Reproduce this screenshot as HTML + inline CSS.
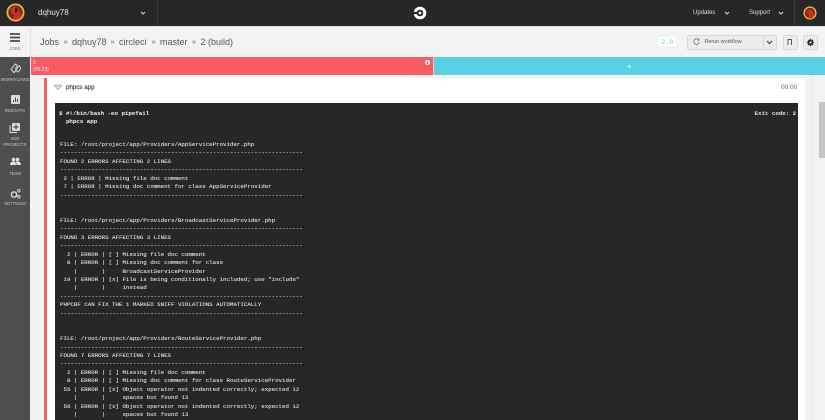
<!DOCTYPE html>
<html><head><meta charset="utf-8">
<style>
html,body{margin:0;padding:0;width:825px;height:420px;overflow:hidden;background:#f3f3f3;font-family:"Liberation Sans",sans-serif}
.a{position:absolute}
.t{position:absolute;white-space:nowrap}
.nav{position:absolute;left:0;width:30px;text-align:center;color:#c8c8c8;font-size:4.3px;line-height:6px}
.bc{position:absolute;white-space:nowrap;top:35.500px;font-size:9px;line-height:12px;color:#555}
.sep{position:absolute;white-space:nowrap;top:35.500px;font-size:7.500px;line-height:12px;color:#666}
pre{margin:0;font-family:"Liberation Mono",monospace;font-size:5.790px;line-height:8.430px;color:#e8e8e8;position:absolute;white-space:pre;-webkit-text-stroke:.07px #e8e8e8}
</style></head>
<body>
<!-- top bar -->
<div class="a" style="left:0;top:0;width:825px;height:26px;background:#272727"></div>
<div class="a" style="left:0;top:26px;width:825px;height:1px;background:#e3e3e3"></div>
<div class="a" style="left:157px;top:0;width:1px;height:26px;background:#3a3a3a"></div>
<div class="a" style="left:794px;top:0;width:1px;height:26px;background:#3f3f3f"></div>
<svg class="a" style="left:6px;top:3px" width="19" height="19" viewBox="0 0 19 19"><circle cx="9.500" cy="9.500" r="9" fill="#f2b53a"/><circle cx="9.500" cy="9.500" r="7.200" fill="#6b2a1c"/><path d="M4 6l5-3 4 3 1 3 2 3-3 4.500H7l1-4.500-3-2z" fill="#c2322a"/><path d="M9 5l3 1-1 3-2 1z" fill="#2a1510"/></svg>
<div class="t" style="left:38px;top:7.500px;font-size:8px;line-height:10px;color:#e4e4e4">dqhuy78</div>
<svg class="a" style="left:140px;top:11px" width="6" height="4" viewBox="0 0 6 4"><path d="M1 1l2 2 2-2" fill="none" stroke="#ddd" stroke-width="1"/></svg>
<svg class="a" style="left:413px;top:6px" width="14" height="14" viewBox="0 0 14 14"><circle cx="7" cy="7" r="4.800" fill="none" stroke="#fff" stroke-width="3"/><rect x="0" y="5.900" width="5" height="2.200" fill="#272727"/><circle cx="7" cy="7" r="1.400" fill="#fff"/></svg>
<div class="t" style="left:693px;top:9px;font-size:6px;line-height:8px;color:#ddd">Updates</div>
<svg class="a" style="left:724px;top:11px" width="6" height="4" viewBox="0 0 6 4"><path d="M1 1l2 2 2-2" fill="none" stroke="#ddd" stroke-width="1"/></svg>
<div class="t" style="left:749px;top:9px;font-size:6px;line-height:8px;color:#ddd">Support</div>
<svg class="a" style="left:778px;top:11px" width="6" height="4" viewBox="0 0 6 4"><path d="M1 1l2 2 2-2" fill="none" stroke="#ddd" stroke-width="1"/></svg>
<svg class="a" style="left:803px;top:6px" width="14" height="14" viewBox="0 0 14 14"><circle cx="7" cy="7" r="6.600" fill="#f2b53a"/><circle cx="7" cy="7" r="5.200" fill="#6b2a1c"/><path d="M3.500 5l3.500-2 2.500 2 1 2 1 2-2 3.500H5.500l.5-3.500L3.500 7z" fill="#c2322a"/></svg>

<!-- sidebar -->
<div class="a" style="left:0;top:27px;width:30px;height:393px;background:#4e4e4e"></div>
<div class="a" style="left:0;top:27px;width:30px;height:30px;background:#f3f3f3"></div>
<div class="a" style="left:30px;top:27px;width:1px;height:30px;background:#e3e3e3"></div>
<div class="a" style="left:30px;top:57px;width:1px;height:363px;background:#f3f3f3"></div>
<svg class="a" style="left:10px;top:33px" width="10" height="9" viewBox="0 0 10 9"><path d="M0 1h10M0 4.500h10M0 8h10" stroke="#4a4a4a" stroke-width="1.800"/></svg>
<div class="nav" style="top:45.500px;color:#777">JOBS</div>
<svg class="a" style="left:10px;top:63px" width="11" height="11" viewBox="0 0 11 11"><path d="M1 6.500l3-4 1.500-1.500 2 1.500-2 3 1 2.500 1.500 1 3-3.500-1.500-2.500-1.500 1-2.500 4-1.500 1.500z" fill="none" stroke="#d5d5d5" stroke-width="1"/></svg>
<div class="nav" style="top:77px">WORKFLOWS</div>
<div class="a" style="left:11px;top:95px;width:9px;height:9px;background:#dcdcdc;border-radius:1px"></div>
<svg class="a" style="left:11px;top:95px" width="9" height="9" viewBox="0 0 9 9"><path d="M2.500 7V5M4.500 7V2.500M6.500 7V4" stroke="#4a4a4a" stroke-width="1"/></svg>
<div class="nav" style="top:108px">INSIGHTS</div>
<svg class="a" style="left:9px;top:122px" width="12" height="12" viewBox="0 0 12 12"><path d="M1 3v7.500h7" fill="none" stroke="#dcdcdc" stroke-width="1"/><rect x="3" y="1" width="8" height="8" rx="1" fill="#dcdcdc"/><path d="M7 2.500v5M4.500 5h5" stroke="#4a4a4a" stroke-width="1.200"/></svg>
<div class="nav" style="top:135.500px">ADD</div>
<div class="nav" style="top:142px">PROJECTS</div>
<svg class="a" style="left:10px;top:157px" width="11" height="9" viewBox="0 0 11 9"><circle cx="3.500" cy="2.500" r="1.800" fill="#e2e2e2"/><circle cx="7.500" cy="2.500" r="1.800" fill="#e2e2e2"/><path d="M0 8c0-3 2-3.500 3.500-3.500S6 5 6 8zM6.500 8c0-1.500-.3-2.500-1-3.300.6-.2 1.300-.2 2-.2C9 4.500 11 5 11 8z" fill="#e2e2e2"/></svg>
<div class="nav" style="top:170.500px">TEAM</div>
<svg class="a" style="left:10px;top:188px" width="11" height="11" viewBox="0 0 11 11"><circle cx="4" cy="6.500" r="2.600" fill="none" stroke="#dcdcdc" stroke-width="1.400"/><circle cx="8.800" cy="2.700" r="1.300" fill="none" stroke="#dcdcdc" stroke-width=".9"/><circle cx="8.800" cy="8.800" r="1.300" fill="none" stroke="#dcdcdc" stroke-width=".9"/></svg>
<div class="nav" style="top:201px">SETTINGS</div>

<!-- breadcrumb bar -->
<div class="bc" style="left:40px">Jobs</div>
<div class="sep" style="left:63.500px">»</div>
<div class="bc" style="left:72px">dqhuy78</div>
<div class="sep" style="left:110.500px">»</div>
<div class="bc" style="left:119px">circleci</div>
<div class="sep" style="left:151.500px">»</div>
<div class="bc" style="left:160px">master</div>
<div class="sep" style="left:192px">»</div>
<div class="bc" style="left:200.500px">2 (build)</div>
<div class="a" style="left:658px;top:37px;width:18px;height:9px;background:#fff"></div>
<div class="t" style="left:661.500px;top:37.500px;font-family:'Liberation Mono',monospace;font-size:6.500px;line-height:9px;color:#5ad1e3">2.0</div>
<div class="a" style="left:687px;top:35px;width:75px;height:13px;background:#ececec;border:.5px solid #d9d9d9;border-radius:2px 0 0 2px"></div>
<div class="a" style="left:763px;top:35px;width:12px;height:13px;background:#ececec;border:.5px solid #d9d9d9;border-radius:0 2px 2px 0"></div>
<svg class="a" style="left:693px;top:38px" width="7" height="7" viewBox="0 0 7 7"><path d="M6 2.200A2.800 2.800 0 1 0 6.300 4.200" fill="none" stroke="#666" stroke-width=".8"/><path d="M6.300 .6v2h-2z" fill="#666"/></svg>
<div class="t" style="left:704.500px;top:37.500px;font-size:5.400px;line-height:8px;color:#555">Rerun workflow</div>
<svg class="a" style="left:766px;top:40px" width="7" height="5" viewBox="0 0 7 5"><path d="M1 1l2.500 2.500L6 1" fill="none" stroke="#444" stroke-width="1.200"/></svg>
<div class="a" style="left:783px;top:35px;width:13px;height:13px;background:#ececec;border:.5px solid #d9d9d9;border-radius:2px"></div>
<svg class="a" style="left:786px;top:38px" width="8" height="8" viewBox="0 0 8 8"><path d="M2 7V1.500h3.500V7" fill="none" stroke="#555" stroke-width="1"/></svg>
<div class="a" style="left:803px;top:35px;width:13px;height:13px;background:#ececec;border:.5px solid #d9d9d9;border-radius:2px"></div>
<svg class="a" style="left:805.500px;top:37.500px" width="9" height="9" viewBox="0 0 9 9"><circle cx="4.500" cy="4.500" r="2.200" fill="none" stroke="#333" stroke-width="1.500"/><path d="M4.500 .8v7.400M.8 4.500h7.400M1.900 1.900l5.200 5.200M7.100 1.900L1.900 7.100" stroke="#333" stroke-width="1"/><circle cx="4.500" cy="4.500" r="1" fill="#ececec"/></svg>

<!-- status bars -->
<div class="a" style="left:31px;top:57px;width:402px;height:18px;background:#f55c64"></div>
<div class="a" style="left:433px;top:57px;width:1px;height:18px;background:#f3c9cd"></div>
<div class="a" style="left:434px;top:57px;width:391px;height:18px;background:#5ad1e3"></div>
<div class="t" style="left:33px;top:59.500px;font-size:5px;line-height:7px;color:#ffe3e5">0<br>(00:23)</div>
<div class="a" style="left:425px;top:60px;width:5px;height:5px;background:#fff;border-radius:50%"></div>
<div class="a" style="left:427.200px;top:61px;width:.7px;height:3px;background:#f55c64"></div>
<div class="t" style="left:627px;top:62px;font-size:8px;line-height:9px;color:#fff">+</div>

<!-- card -->
<div class="a" style="left:44px;top:78px;width:2.500px;height:342px;background:#f55c64"></div>
<div class="a" style="left:46.500px;top:78px;width:758.500px;height:342px;background:#fff"></div>
<svg class="a" style="left:54px;top:84px" width="8" height="7" viewBox="0 0 8 7"><path d="M.5 1.500l3.500 4 3.500-4L6 .7 4 2.500 2 .7z" fill="none" stroke="#888" stroke-width=".7"/></svg>
<div class="t" style="left:66px;top:84px;font-size:6.200px;line-height:8px;color:#555;-webkit-text-stroke:.25px #555">phpcs app</div>
<div class="t" style="left:781px;top:83.500px;font-size:6.500px;line-height:8px;color:#666">00:00</div>

<!-- log -->
<div class="a" style="left:55px;top:103px;width:743px;height:317px;background:#272727"></div>
<pre style="left:59px;top:110px;font-weight:bold;color:#f4f4f4;-webkit-text-stroke:0">$ #!/bin/bash -eo pipefail
  phpcs app</pre>
<pre style="left:754.500px;top:110px;font-weight:bold;color:#e8e8e8;-webkit-text-stroke:0">Exit code: 2</pre>
<pre style="left:60px;top:141px">FILE: /root/project/app/Providers/AppServiceProvider.php
----------------------------------------------------------------------
FOUND 2 ERRORS AFFECTING 2 LINES
----------------------------------------------------------------------
 2 | ERROR | Missing file doc comment
 7 | ERROR | Missing doc comment for class AppServiceProvider
----------------------------------------------------------------------


FILE: /root/project/app/Providers/BroadcastServiceProvider.php
----------------------------------------------------------------------
FOUND 3 ERRORS AFFECTING 3 LINES
----------------------------------------------------------------------
  2 | ERROR | [ ] Missing file doc comment
  8 | ERROR | [ ] Missing doc comment for class
    |       |     BroadcastServiceProvider
 19 | ERROR | [x] File is being conditionally included; use "include"
    |       |     instead
----------------------------------------------------------------------
PHPCBF CAN FIX THE 1 MARKED SNIFF VIOLATIONS AUTOMATICALLY
----------------------------------------------------------------------


FILE: /root/project/app/Providers/RouteServiceProvider.php
----------------------------------------------------------------------
FOUND 7 ERRORS AFFECTING 7 LINES
----------------------------------------------------------------------
  2 | ERROR | [ ] Missing file doc comment
  8 | ERROR | [ ] Missing doc comment for class RouteServiceProvider
 55 | ERROR | [x] Object operator not indented correctly; expected 12
    |       |     spaces but found 13
 56 | ERROR | [x] Object operator not indented correctly; expected 12
    |       |     spaces but found 13</pre>

<!-- scrollbar -->
<div class="a" style="left:805px;top:75px;width:20px;height:345px;background:#f3f3f3"></div>
<div class="a" style="left:812px;top:75px;width:1px;height:345px;background:#e8e8e8"></div>
<div class="a" style="left:819px;top:102px;width:6px;height:56px;background:#c4c4c4"></div>
</body></html>
